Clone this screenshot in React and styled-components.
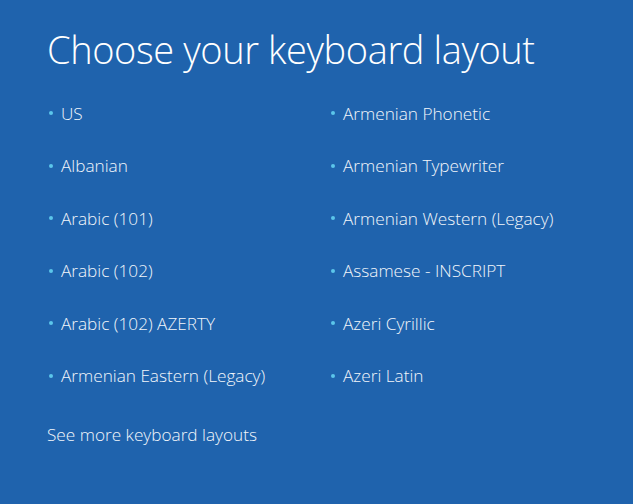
import React from "react"
import styled, { createGlobalStyle } from "styled-components"

const GlobalStyle = createGlobalStyle`
  html, body {
    margin: 0;
    padding: 0;
    background: #1f63ad;
  }
  body {
    font-family: "Open Sans", "Noto Sans", sans-serif;
    color: #ffffff;
  }
`

const layouts = [
  "US",
  "Armenian Phonetic",
  "Albanian",
  "Armenian Typewriter",
  "Arabic (101)",
  "Armenian Western (Legacy)",
  "Arabic (102)",
  "Assamese - INSCRIPT",
  "Arabic (102) AZERTY",
  "Azeri Cyrillic",
  "Armenian Eastern (Legacy)",
  "Azeri Latin",
]

const App = () => (
  <>
    <GlobalStyle />
    <Screen>
      <Title>Choose your keyboard layout</Title>
      <LayoutGrid>
        {layouts.map(name => (
          <LayoutItem key={name}>
            <Bullet />
            {name}
          </LayoutItem>
        ))}
      </LayoutGrid>
      <MoreLink>See more keyboard layouts</MoreLink>
    </Screen>
  </>
)

const Screen = styled.div`
  width: 633px;
  height: 504px;
  box-sizing: border-box;
  padding: 22px 0 0 47px;
  background: #1f63ad;
  overflow: hidden;
`

const Title = styled.h1`
  margin: 0;
  font-size: 38px;
  font-weight: 300;
  line-height: 54px;
  letter-spacing: -0.4px;
  color: #ffffff;
`

const LayoutGrid = styled.ul`
  list-style: none;
  margin: 24px 0 0 0;
  padding: 0;
  display: grid;
  grid-template-columns: 282px 1fr;
  grid-auto-rows: 52.6px;
`

const LayoutItem = styled.li`
  display: flex;
  align-items: center;
  height: 26px;
  font-size: 17.2px;
  font-weight: 350;
  color: #f2f6fb;
`

const Bullet = styled.span`
  width: 4px;
  height: 4px;
  border-radius: 50%;
  background: #5cc6ea;
  margin: 0 8px 0 2px;
`

const MoreLink = styled.div`
  margin-top: 7px;
  font-size: 17.2px;
  font-weight: 350;
  color: #f2f6fb;
`

export default App
